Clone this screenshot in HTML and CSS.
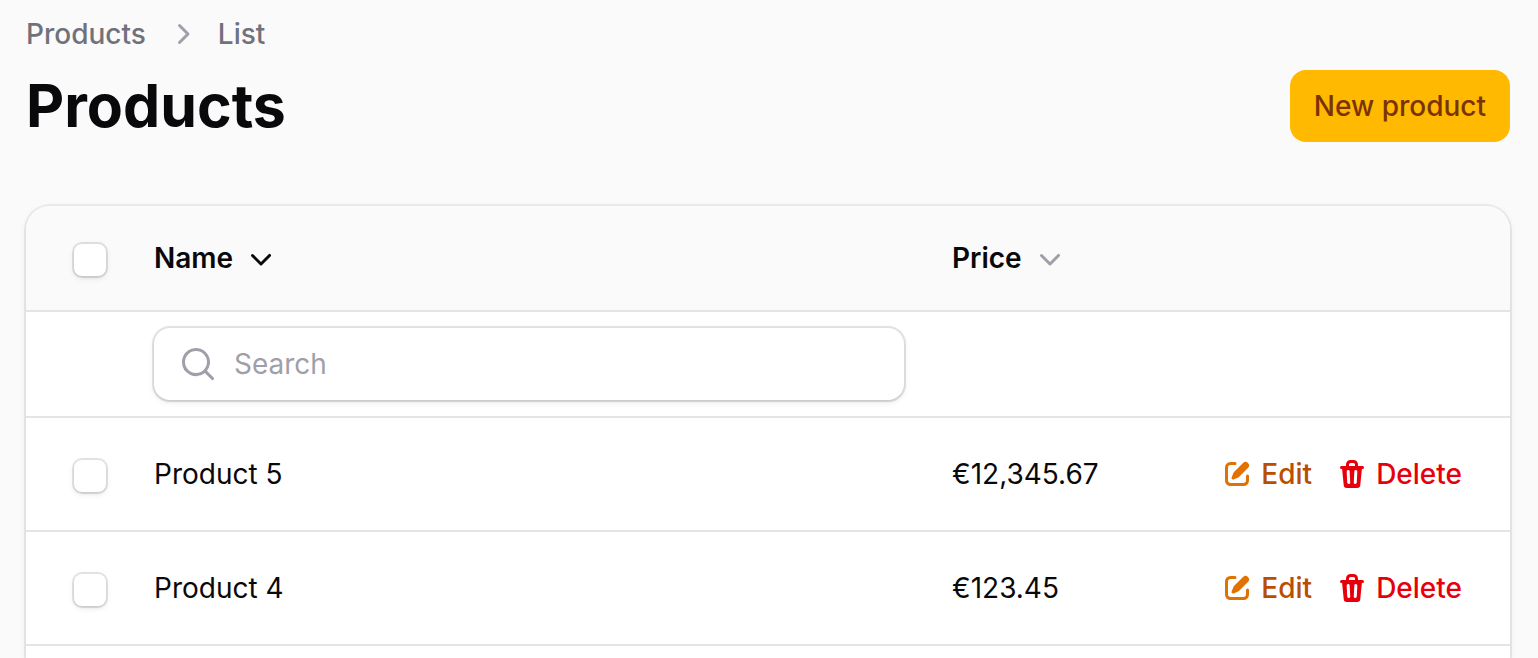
FILE: index.html
```html
<!DOCTYPE html>
<html lang="en">
<head>
    <meta charset="UTF-8">
    <meta name="viewport" content="width=device-width, initial-scale=1">
    <title>Products</title>
    <link rel="stylesheet" href="styles.css">
</head>
<body>
<!-- shared icon shapes -->
<svg class="sprite" aria-hidden="true">
    <symbol id="chevron-right" viewBox="0 0 20 20">
        <path fill-rule="evenodd" d="M8.22 5.22a.75.75 0 0 1 1.06 0l4.25 4.25a.75.75 0 0 1 0 1.06l-4.25 4.25a.75.75 0 0 1-1.06-1.06L11.94 10 8.22 6.28a.75.75 0 0 1 0-1.06Z"/>
    </symbol>
    <symbol id="chevron-down" viewBox="0 0 20 20">
        <path fill-rule="evenodd" d="M5.22 8.22a.75.75 0 0 1 1.06 0L10 11.94l3.72-3.72a.75.75 0 1 1 1.06 1.06l-4.25 4.25a.75.75 0 0 1-1.06 0L5.22 9.28a.75.75 0 0 1 0-1.06Z"/>
    </symbol>
    <symbol id="magnifier" viewBox="0 0 20 20">
        <path fill-rule="evenodd" d="M9 3.5a5.5 5.5 0 1 0 0 11 5.5 5.5 0 0 0 0-11ZM2 9a7 7 0 1 1 12.452 4.391l3.328 3.329a.75.75 0 1 1-1.06 1.06l-3.329-3.328A7 7 0 0 1 2 9Z"/>
    </symbol>
    <symbol id="pencil" viewBox="0 0 16 16">
        <path d="M13.488 2.513a1.75 1.75 0 0 0-2.475 0L6.75 6.774a2.75 2.75 0 0 0-.596.892l-.848 2.047a.75.75 0 0 0 .98.98l2.047-.848a2.75 2.75 0 0 0 .892-.596l4.261-4.262a1.75 1.75 0 0 0 0-2.474Z"/>
        <path d="M4.75 3.5c-.69 0-1.25.56-1.25 1.25v6.5c0 .69.56 1.25 1.25 1.25h6.5c.69 0 1.25-.56 1.25-1.25V9A.75.75 0 0 1 14 9v2.25A2.75 2.75 0 0 1 11.25 14h-6.5A2.75 2.75 0 0 1 2 11.25v-6.5A2.75 2.75 0 0 1 4.75 2H7a.75.75 0 0 1 0 1.5H4.75Z"/>
    </symbol>
    <symbol id="trash" viewBox="0 0 16 16">
        <path fill-rule="evenodd" d="M5 3.25V4H2.75a.75.75 0 0 0 0 1.5h.3l.815 8.15A1.5 1.5 0 0 0 5.357 15h5.285a1.5 1.5 0 0 0 1.493-1.35l.815-8.15h.3a.75.75 0 0 0 0-1.5H11v-.75A2.25 2.25 0 0 0 8.75 1h-1.5A2.25 2.25 0 0 0 5 3.25Zm2.25-.75a.75.75 0 0 0-.75.75V4h3v-.75a.75.75 0 0 0-.75-.75h-1.5ZM6.05 6a.75.75 0 0 1 .787.713l.275 5.5a.75.75 0 0 1-1.498.075l-.275-5.5A.75.75 0 0 1 6.05 6Zm3.9 0a.75.75 0 0 1 .712.787l-.275 5.5a.75.75 0 0 1-1.498-.075l.275-5.5a.75.75 0 0 1 .786-.711Z"/>
    </symbol>
</svg>

<div class="page">
    <header class="header">
        <nav class="breadcrumbs" aria-label="Breadcrumb">
            <a href="#">Products</a>
            <svg class="icon"><use href="#chevron-right"/></svg>
            <span>List</span>
        </nav>
        <div class="heading">
            <h1>Products</h1>
            <a class="button" href="#new">New product</a>
        </div>
    </header>

    <main class="card">
        <table class="products">
            <colgroup>
                <col class="col-select">
                <col>
                <col class="col-price">
                <col class="col-actions">
            </colgroup>
            <thead>
            <tr>
                <th><input type="checkbox" class="checkbox" aria-label="Select all products"></th>
                <th>
                    <button type="button" class="sort sorted">Name <svg class="icon"><use href="#chevron-down"/></svg></button>
                </th>
                <th>
                    <button type="button" class="sort">Price <svg class="icon"><use href="#chevron-down"/></svg></button>
                </th>
                <td></td>
            </tr>
            </thead>
            <tbody>
            <tr class="filters">
                <td></td>
                <td>
                    <label class="search">
                        <svg class="icon"><use href="#magnifier"/></svg>
                        <input type="search" placeholder="Search" aria-label="Search by name">
                    </label>
                </td>
                <td></td>
                <td></td>
            </tr>
            <tr>
                <td><input type="checkbox" class="checkbox" aria-label="Select Product 5"></td>
                <td>Product 5</td>
                <td>€12,345.67</td>
                <td>
                    <div class="actions">
                        <a class="action edit" href="#edit-5"><svg class="icon-small"><use href="#pencil"/></svg>Edit</a>
                        <button type="button" class="action delete"><svg class="icon-small"><use href="#trash"/></svg>Delete</button>
                    </div>
                </td>
            </tr>
            <tr>
                <td><input type="checkbox" class="checkbox" aria-label="Select Product 4"></td>
                <td>Product 4</td>
                <td>€123.45</td>
                <td>
                    <div class="actions">
                        <a class="action edit" href="#edit-4"><svg class="icon-small"><use href="#pencil"/></svg>Edit</a>
                        <button type="button" class="action delete"><svg class="icon-small"><use href="#trash"/></svg>Delete</button>
                    </div>
                </td>
            </tr>
            </tbody>
        </table>
    </main>
</div>
</body>
</html>
```
FILE: styles.css
```css
:root {
  --gray-50: #fafafa;
  --gray-200: #e4e4e7;
  --gray-400: #9f9fa9;
  --gray-500: #71717b;
  --gray-950: #09090b;
  --ring: 0 0 0 2px rgba(9, 9, 11, 0.1);
  --shadow: 0 2px 6px rgba(0, 0, 0, 0.1), 0 2px 4px -2px rgba(0, 0, 0, 0.1);
}

* {
  box-sizing: border-box;
}

body {
  margin: 0;
  background: var(--gray-50);
  color: var(--gray-950);
  font-family: Inter, "Liberation Sans", sans-serif;
  font-size: 28px;
  line-height: 40px;
}

a {
  color: inherit;
  text-decoration: none;
}

button,
input {
  font: inherit;
  color: inherit;
}

button {
  padding: 0;
  border: 0;
  background: none;
  cursor: pointer;
}

.sprite {
  display: none;
}

.icon,
.icon-small {
  flex: none;
  width: 40px;
  height: 40px;
  fill: currentColor;
}

.icon-small {
  width: 32px;
  height: 32px;
}

.page {
  display: flex;
  flex-direction: column;
  gap: 64px;
  height: 100vh;
  padding: 14px 28px 0 26px;
  overflow: hidden;
}

.header {
  display: flex;
  flex-direction: column;
  gap: 16px;
}

.breadcrumbs {
  display: flex;
  align-items: center;
  gap: 16px;
  color: var(--gray-500);
  font-weight: 500;
}

.breadcrumbs .icon {
  color: var(--gray-400);
}

.heading {
  display: flex;
  align-items: center;
  justify-content: space-between;
}

h1 {
  margin: 0;
  font-size: 59px;
  font-weight: 700;
  line-height: 72px;
}

.button {
  padding: 16px 24px;
  border-radius: 16px;
  background: #ffb900;
  color: #7b3306;
  font-weight: 500;
}

/* the card runs on below the fold */
.card {
  flex: 1 0 auto;
  border-radius: 24px 24px 0 0;
  background: white;
  box-shadow: 0 0 0 2px rgba(9, 9, 11, 0.05), var(--shadow);
}

.products {
  width: 100%;
  table-layout: fixed;
  border-spacing: 0;
}

.col-select {
  width: 104px;
}

.col-price {
  width: 270px;
}

.col-actions {
  width: 312px;
}

.products th,
.products td {
  height: 114px;
  padding: 0 24px;
  border-bottom: 2px solid var(--gray-200);
  text-align: left;
}

.products tr > :first-child {
  padding-left: 48px;
}

.products tr > :last-child {
  padding-right: 48px;
}

.products thead th,
.products thead td,
.products .filters td {
  height: 106px;
}

.products thead th,
.products thead td {
  background: var(--gray-50);
}

.products thead th:first-child {
  border-top-left-radius: 24px;
}

.products thead td:last-child {
  border-top-right-radius: 24px;
}

.checkbox {
  display: block;
  appearance: none;
  width: 32px;
  height: 32px;
  margin: 4px 0 0;
  border-radius: 8px;
  background: white;
  box-shadow: var(--ring), var(--shadow);
}

.checkbox:checked {
  background: #ffb900;
}

.sort {
  display: flex;
  align-items: center;
  gap: 8px;
  font-weight: 600;
}

.sort .icon {
  color: var(--gray-400);
}

.sort.sorted .icon {
  color: var(--gray-950);
}

.search {
  display: flex;
  align-items: center;
  gap: 16px;
  height: 72px;
  padding: 0 24px;
  border-radius: 16px;
  background: white;
  box-shadow: var(--ring), var(--shadow);
}

.search .icon {
  color: var(--gray-400);
}

.search input {
  flex: 1;
  min-width: 0;
  padding: 0;
  border: 0;
  outline: 0;
  background: none;
  appearance: none;
}

.search input::placeholder {
  color: var(--gray-400);
}

.actions {
  display: flex;
  justify-content: flex-end;
  gap: 24px;
}

.action {
  display: flex;
  align-items: center;
  gap: 8px;
  font-weight: 500;
}

.edit {
  color: #bb4d00;
}

.edit .icon-small {
  color: #e17100;
}

.delete {
  color: #e7000b;
}
```
